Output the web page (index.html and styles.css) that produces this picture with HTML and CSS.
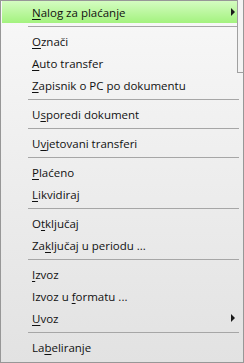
FILE: index.html
```html
<!DOCTYPE html>
<html lang="hr">
<head>
    <meta charset="UTF-8">
    <title>Izbornik</title>
    <link rel="stylesheet" href="styles.css">
</head>
<body>
    <div class="menu">
        <div class="item active"><span><u>N</u>alog za plaćanje</span><span class="arrow"></span></div>
        <div class="sep"></div>
        <div class="item"><span><u>O</u>znači</span></div>
        <div class="item"><span><u>A</u>uto transfer</span></div>
        <div class="item"><span><u>Z</u>apisnik o PC po dokumentu</span></div>
        <div class="sep"></div>
        <div class="item"><span>U<u>s</u>poredi dokument</span></div>
        <div class="sep"></div>
        <div class="item"><span>U<u>v</u>jetovani transferi</span></div>
        <div class="sep"></div>
        <div class="item"><span><u>P</u>laćeno</span></div>
        <div class="item"><span><u>L</u>ikvidiraj</span></div>
        <div class="sep"></div>
        <div class="item"><span>O<u>t</u>ključaj</span></div>
        <div class="item"><span>Za<u>k</u>ljučaj u periodu ...</span></div>
        <div class="sep"></div>
        <div class="item"><span><u>I</u>zvoz</span></div>
        <div class="item"><span>Izvoz u <u>f</u>ormatu ...</span></div>
        <div class="item"><span><u>U</u>voz</span><span class="arrow"></span></div>
        <div class="sep"></div>
        <div class="item"><span>La<u>b</u>eliranje</span></div>
        <div class="edge"></div>
    </div>
</body>
</html>
```

FILE: styles.css
```css
body {
    margin: 0;
    background-color: #fff;
}
.menu {
    position: relative;
    width: 244px;
    height: 363px;
    box-sizing: border-box;
    border: 1px solid #979797;
    padding: 0 6px 0 1px;
    background: linear-gradient(#f8f8f8, #e2e2e2);
    font-family: "Open Sans", "Noto Sans", sans-serif;
    font-size: 11.5px;
    color: #111;
}
.item {
    display: flex;
    align-items: center;
    height: 22px;
    padding: 0 2px 0 30px;
    white-space: nowrap;
}
.item u {
    text-underline-offset: 2px;
}
.active {
    background: linear-gradient(#d4fcc1, #a3f27e);
}
.arrow {
    margin-left: auto;
    width: 0;
    height: 0;
    border-top: 4px solid transparent;
    border-bottom: 4px solid transparent;
    border-left: 4px solid #1a1a1a;
}
.sep {
    height: 1px;
    margin: 3px -2px 3px 26px;
    background-color: #a6a6a6;
}
.edge {
    position: absolute;
    top: -1px;
    right: -1px;
    width: 5px;
    height: 72px;
    background-color: #f3f3f3;
    border-left: 1px solid #a0a0a0;
    border-bottom: 1px solid #a0a0a0;
    border-right: 1px solid #979797;
}
```
